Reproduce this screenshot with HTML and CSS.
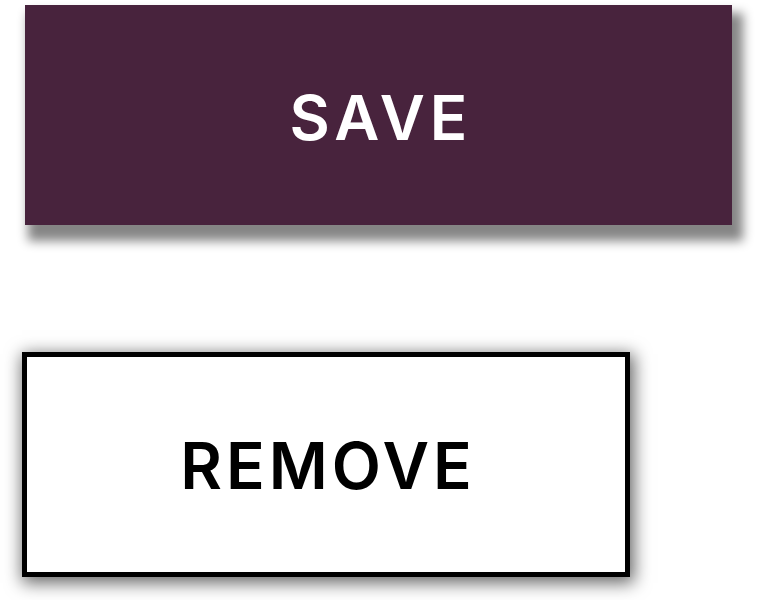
FILE: index.html
```html
<!DOCTYPE html>
<html>
<head>
<meta charset="utf-8">
<link rel="stylesheet" href="styles.css">
</head>
<body>
<main class="page">
  <button class="btn btn-save" type="button">SAVE</button>
  <button class="btn btn-remove" type="button">REMOVE</button>
</main>
</body>
</html>
```

FILE: styles.css
```css
html, body {
  margin: 0;
  padding: 0;
  background: #ffffff;
}

.page {
  display: flex;
  flex-direction: column;
  align-items: flex-start;
  gap: 127px;
  padding: 5px 0 23px 22px;
  min-height: 600px;
  box-sizing: border-box;
}

.btn {
  display: flex;
  flex-shrink: 0;
  align-items: center;
  justify-content: center;
  box-sizing: border-box;
  margin: 0;
  font-family: "Inter", "Liberation Sans", sans-serif;
  font-weight: 600;
  line-height: 1;
  cursor: pointer;
}

.btn-save {
  margin-left: 3px;
  width: 707px;
  height: 220px;
  padding: 6px 0 0 5px;
  border: none;
  background: #48233d;
  color: #ffffff;
  font-size: 62px;
  letter-spacing: 5px;
  box-shadow: 7px 12px 10px 4px rgba(0, 0, 0, 0.48);
}

.btn-remove {
  width: 608px;
  height: 225px;
  padding: 2px 0 0 4px;
  border: 5px solid #000000;
  background: #ffffff;
  color: #000000;
  font-size: 64px;
  letter-spacing: 4px;
  box-shadow: 2px 4px 16px 2px rgba(0, 0, 0, 0.6);
}
```
